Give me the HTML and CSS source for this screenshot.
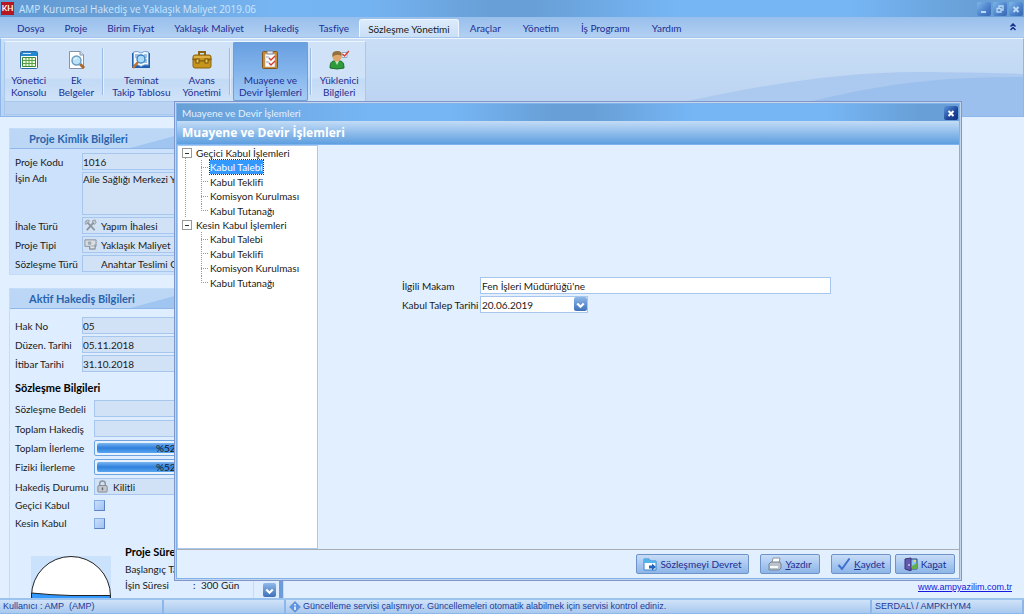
FILE: index.html
```html
<!DOCTYPE html>
<html lang="tr">
<head>
  <meta charset="UTF-8">
  <title>AMP Kurumsal Hakediş ve Yaklaşık Maliyet 2019.06</title>
  <link rel="stylesheet" href="styles.css">
</head>
<body>
  <header class="titlebar">
    <span class="app-logo">KH</span>
    <span class="app-title">AMP Kurumsal Hakediş ve Yaklaşık Maliyet 2019.06</span>
    <button class="win-btn" aria-label="Simge durumuna küçült"><svg viewBox="0 0 14 14"><path d="M4 10h5" stroke-width="2"/></svg></button>
    <button class="win-btn" aria-label="Önceki boyut"><svg viewBox="0 0 14 14"><path d="M6 6V4h4v4H8M4 6.500h4v3.500H4z" stroke-width="1.300"/></svg></button>
    <button class="win-btn" aria-label="Kapat"><svg viewBox="0 0 14 14"><path d="M4.500 5l5 5m0-5l-5 5" stroke-width="2"/></svg></button>
  </header>

  <nav class="tabs">
    <button class="tab">Dosya</button>
    <button class="tab">Proje</button>
    <button class="tab">Birim Fiyat</button>
    <button class="tab">Yaklaşık Maliyet</button>
    <button class="tab">Hakediş</button>
    <button class="tab">Tasfiye</button>
    <button class="tab active">Sözleşme Yönetimi</button>
    <button class="tab">Araçlar</button>
    <button class="tab">Yönetim</button>
    <button class="tab">İş Programı</button>
    <button class="tab">Yardım</button>
    <button class="collapse" aria-label="Şeridi daralt"><svg viewBox="0 0 8 8"><path d="M1.500 3.500L4 1l2.500 2.500M1.500 7L4 4.500 6.500 7"/></svg></button>
  </nav>

  <section class="ribbon">
    <svg class="wave" viewBox="0 0 1024 79" preserveAspectRatio="none">
      <path d="M690 63C790 42 860 32 940 34Q990 34 1024 36V79H690z" fill="#acc9ef"/>
      <path d="M790 70C860 50 930 38 1024 39V79H790z" fill="#9bc0ed"/>
    </svg>
    <div class="ribbon-group">
      <div class="ribbon-items">
        <button class="tool">
          <svg viewBox="0 0 20 20"><rect x="1.500" y="1.500" width="17" height="17" rx="1" fill="#fff" stroke="#2d6ca8"/><path d="M2 2h16v4H2z" fill="#2587ce"/><path d="M4 3.500h8" stroke="#c9e8ff"/><path d="M3.500 7.500h13v9h-13z" fill="#eefbdc" stroke="#3d8a35"/><path d="M4 10.500h12M4 13.500h12M7 8v8M10 8v8M13 8v8" stroke="#59a14d"/></svg>
          <span>Yönetici<br>Konsolu</span>
        </button>
        <button class="tool">
          <svg viewBox="0 0 20 20"><path d="M3.500 1.500h11l3 3v14h-14z" fill="#fff" stroke="#8494a8"/><path d="M14 1v4h4" fill="#d5e1ee" stroke="#8494a8"/><path d="M14 14l4 4" stroke="#a9672c" stroke-width="3"/><circle cx="10.500" cy="10.500" r="4.500" fill="#b9e3fb" stroke="#6c9dc2" stroke-width="1.500"/><path d="M8 10q1-2 3-2" stroke="#fff" fill="none"/></svg>
          <span>Ek<br>Belgeler</span>
        </button>
        <i class="sep"></i>
        <button class="tool">
          <svg viewBox="0 0 20 20"><path d="M1 3h18v15H1z" fill="#1f5fb2"/><path d="M2.500 2Q7 .500 10 3q3-2.500 7.500-1v13Q13 14 10 16.500 7 14 2.500 15z" fill="#f3f9ff" stroke="#6d9bce"/><path d="M4 5h4M4 7h3M13 5h3M14 7h2M14 10h2M13 12h3" stroke="#4b84c7"/><path d="M7 12l-5 6" stroke="#c1722c" stroke-width="2.500"/><circle cx="10" cy="9" r="4" fill="#a8dbfa" stroke="#3a7ebe" stroke-width="1.300"/></svg>
          <span>Teminat<br>Takip Tablosu</span>
        </button>
        <button class="tool">
          <svg viewBox="0 0 20 20"><path d="M7 5V2h6v3" fill="none" stroke="#8a6511" stroke-width="2"/><rect x="1" y="5" width="18" height="13" rx="2" fill="#c8951c" stroke="#8a6511"/><path d="M.500 9Q10 13 19.500 9" fill="none" stroke="#8a6511" stroke-width="1.500"/><path d="M2 6h16v2H2z" fill="#dcb044"/><rect x="4" y="9" width="3" height="4" fill="#e8cc6c" stroke="#765508"/><rect x="13" y="9" width="3" height="4" fill="#e8cc6c" stroke="#765508"/></svg>
          <span>Avans<br>Yönetimi</span>
        </button>
        <i class="sep"></i>
        <button class="tool active">
          <svg viewBox="0 0 20 20"><rect x="2.500" y="1.500" width="15" height="17" rx="1" fill="#c98b32" stroke="#85551b"/><path d="M5 4h10v13H5z" fill="#fff" stroke="#b1a28c" stroke-width=".600"/><path d="M7 1h6v3H7z" fill="#e1e6ee" stroke="#777e8a" stroke-width=".800"/><path d="M6 7h3M6 12h3" stroke="#8ba2c2"/><path d="M9 8l2 2 4-4M9 13l2 2 4-4" fill="none" stroke="#d43b2b" stroke-width="1.400"/></svg>
          <span>Muayene ve<br>Devir İşlemleri</span>
        </button>
        <i class="sep"></i>
        <button class="tool">
          <svg viewBox="0 0 20 20"><path d="M1 18q0-7 4-7h6q4 0 4 7-7 2-14 0z" fill="#2f9b3b" stroke="#1d6c2a"/><path d="M6 11l2 4 2-4z" fill="#bfe9c0"/><ellipse cx="8" cy="6.500" rx="4.500" ry="5" fill="#e0a868"/><path d="M3.500 7Q2 1 8 1t4.500 5Q8 3 3.500 7" fill="#94703a"/><path d="M13 2.500h5v5h-5z" fill="#fff" stroke="#92a8c4"/><path d="M13.500 4l2 2L20 1" fill="none" stroke="#dc3a2a" stroke-width="1.500"/></svg>
          <span>Yüklenici<br>Bilgileri</span>
        </button>
      </div>
      <div class="ribbon-caption"></div>
    </div>
  </section>

  <main class="workspace">
    <aside class="sidebar">
      <section class="panel project">
        <h2>Proje Kimlik Bilgileri</h2>
        <div class="fields">
          <label for="kod">Proje Kodu</label><input id="kod" value="1016" readonly>
          <label for="ad">İşin Adı</label><textarea id="ad" readonly>Aile Sağlığı Merkezi Yapım İşi</textarea>
          <label for="ihale">İhale Türü</label>
          <div class="icon-field">
            <svg viewBox="0 0 14 14"><path d="M2 2l9.500 10M3 12l8-9" stroke="#8e969f" stroke-width="2" fill="none"/><path d="M1 4l3-3 2 1-4 4zM9 2l3-1 1 3-2 2z" fill="#c5cbd1" stroke="#7d858e" stroke-width=".700"/></svg>
            <input id="ihale" value="Yapım İhalesi" readonly>
          </div>
          <label for="tip">Proje Tipi</label>
          <div class="icon-field">
            <svg viewBox="0 0 14 14"><path d="M1 2h12v7H1z" fill="#d8dde2" stroke="#868e98"/><circle cx="6" cy="5.500" r="2" fill="#a1a9b2"/><path d="M6 9v3h6V7" fill="#b9c0c8" stroke="#818992"/><path d="M7 10h4" stroke="#eef1f4"/></svg>
            <input id="tip" value="Yaklaşık Maliyet" readonly>
          </div>
          <label for="tur">Sözleşme Türü</label>
          <div class="icon-field"><svg viewBox="0 0 14 14"></svg><input id="tur" value="Anahtar Teslimi Götürü" readonly></div>
        </div>
      </section>

      <section class="panel progress-panel">
        <h2>Aktif Hakediş Bilgileri</h2>
        <div class="fields">
          <label for="hakno">Hak No</label><input id="hakno" value="05" readonly>
          <label for="duzen">Düzen. Tarihi</label><input id="duzen" value="05.11.2018" readonly>
          <label for="itibar">İtibar Tarihi</label><input id="itibar" value="31.10.2018" readonly>
        </div>
        <h3>Sözleşme Bilgileri</h3>
        <div class="fields wide">
          <label for="bedel">Sözleşme Bedeli</label><input id="bedel" readonly>
          <label for="toplam">Toplam Hakediş</label><input id="toplam" readonly>
          <span>Toplam İlerleme</span><div class="meter"><i></i><b>%52</b></div>
          <span>Fiziki İlerleme</span><div class="meter"><i></i><b>%52</b></div>
          <label for="durum">Hakediş Durumu</label>
          <div class="icon-field">
            <svg viewBox="0 0 14 14"><path d="M4 7V4q0-3 3-3t3 3v3" fill="none" stroke="#8c949c" stroke-width="1.500"/><rect x="2" y="6" width="10" height="7" rx="1" fill="#c3c8ce" stroke="#80878f"/><path d="M7 8v3" stroke="#616971" stroke-width="1.500"/></svg>
            <input id="durum" value="Kilitli" readonly>
          </div>
          <label for="gecici">Geçici Kabul</label><input type="checkbox" id="gecici">
          <label for="kesin">Kesin Kabul</label><input type="checkbox" id="kesin">
        </div>
        <div class="duration">
          <svg class="gauge" viewBox="0 0 80 80"><path d="M0 0h80v80H0z" fill="#cae2fc"/><circle cx="40" cy="40" r="39.500" fill="#fff" stroke="#222"/><path d="M.500 37Q20 39 40 39.500h39.500A39.500 39.500 0 0 1 .500 40z" fill="#3399ff" stroke="#222"/></svg>
          <div class="duration-info">
            <h3>Proje Süreci</h3>
            <p>Başlangıç Tarihi</p>
            <p><span>İşin Süresi</span><span>:</span><span>300 Gün</span></p>
          </div>
          <div class="duration-side"><button class="drop" aria-label="Aşağı"><svg viewBox="0 0 12 12"><path d="M3 5l3 3 3-3"/></svg></button></div>
        </div>
      </section>
    </aside>
    <a class="site-link" href="#">www.ampyazilim.com.tr</a>
  </main>

  <footer class="statusbar">
    <span class="user">Kullanıcı : AMP&nbsp; (AMP)</span>
    <span class="blank"></span>
    <span class="message"><svg viewBox="0 0 12 12"><path d="M6 0l6 6-6 6-6-6z" fill="#5d94e3" stroke="#a8bad6"/><path d="M6 3v1.500M6 5.500V9" stroke="#fff" stroke-width="1.500"/></svg>Güncelleme servisi çalışmıyor. Güncellemeleri otomatik alabilmek için servisi kontrol ediniz.</span>
    <span class="server">SERDAL\ / AMPKHYM4</span>
  </footer>

  <div class="dialog" role="dialog" aria-labelledby="dialog-title">
    <div class="dialog-bar">
      <span>Muayene ve Devir İşlemleri</span>
      <button class="win-btn" aria-label="Pencereyi kapat"><svg viewBox="0 0 14 14"><path d="M4.500 5l5 5m0-5l-5 5" stroke-width="2"/></svg></button>
    </div>
    <h1 id="dialog-title">Muayene ve Devir İşlemleri</h1>
    <div class="dialog-body">
      <ul class="tree">
        <li>
          <button class="branch">Geçici Kabul İşlemleri</button>
          <ul>
            <li><button class="selected">Kabul Talebi</button></li>
            <li><button>Kabul Teklifi</button></li>
            <li><button>Komisyon Kurulması</button></li>
            <li><button>Kabul Tutanağı</button></li>
          </ul>
        </li>
        <li>
          <button class="branch">Kesin Kabul İşlemleri</button>
          <ul>
            <li><button>Kabul Talebi</button></li>
            <li><button>Kabul Teklifi</button></li>
            <li><button>Komisyon Kurulması</button></li>
            <li><button>Kabul Tutanağı</button></li>
          </ul>
        </li>
      </ul>
      <form class="request">
        <label for="makam">İlgili Makam</label>
        <input id="makam" value="Fen İşleri Müdürlüğü'ne">
        <label for="tarih">Kabul Talep Tarihi</label>
        <div class="date">
          <input id="tarih" value="20.06.2019">
          <button type="button" class="drop" aria-label="Takvim"><svg viewBox="0 0 12 12"><path d="M3 5l3 3 3-3"/></svg></button>
        </div>
      </form>
    </div>
    <div class="dialog-actions">
      <button class="action transfer"><svg viewBox="0 0 14 14"><path d="M1 2h5l1 2h6v9H1z" fill="#fff" stroke="#3486ca"/><path d="M1 2h5l1 2h6v2H1z" fill="#52b4ed"/><path d="M6 8.500h3V6.500l4 3.500-4 3.500v-2H6z" fill="#2566bd"/></svg>Sözleşmeyi Devret</button>
      <button class="action print"><svg viewBox="0 0 14 14"><path d="M4 6l1-5h7l-1 5z" fill="#fff" stroke="#8a949f"/><path d="M1 7l2-2h9l1 2v4l-2 2H1z" fill="#bac3cc" stroke="#76818d"/><path d="M2 10h8" stroke="#f7f9fb" stroke-width="2"/></svg><span><u>Y</u>azdır</span></button>
      <button class="action save"><svg viewBox="0 0 14 14"><path d="M1.500 8L5 12 12.500 1.500" fill="none" stroke="#3e6fd0" stroke-width="2"/></svg><span><u>K</u>aydet</span></button>
      <button class="action close"><svg viewBox="0 0 14 14"><path d="M5 2h8v10H5z" fill="#8cc8ee" stroke="#2f4379"/><path d="M8 9l5-3v6H8z" fill="#65ad45"/><circle cx="11" cy="4" r="1" fill="#ffe061"/><path d="M1 2l6-1v13l-6-2z" fill="#6558b0" stroke="#383574"/><path d="M5 7v2" stroke="#fff"/></svg><span>Ka<u>p</u>at</span></button>
    </div>
  </div>
</body>
</html>
```
FILE: styles.css
```css
* {
  box-sizing: border-box;
}

body {
  position: relative;
  display: flex;
  flex-direction: column;
  height: 100vh;
  margin: 0;
  overflow: hidden;
  background: #e1efff;
  color: #1a1a1a;
  font-family: Lato, "Open Sans", sans-serif;
  font-size: 10px;
  line-height: 12px;
}

button,
input,
textarea {
  margin: 0;
  padding: 0;
  border: none;
  background: none;
  color: inherit;
  font: inherit;
}

h1, h2, h3, p, ul {
  margin: 0;
  padding: 0;
}

/* title bar */
.titlebar {
  display: flex;
  flex: none;
  align-items: center;
  gap: 2px;
  height: 17px;
  padding: 0 1px;
  background: linear-gradient(90deg, #619bd5, #689fd6 10%, #76b5f3 27%, #74b3f1 36%, #689fd6 48%, #689fd6 52%, #76b6f5 66%, #76b6f5 83%, #689fd6 95%);
}

.app-logo {
  width: 13px;
  height: 13px;
  background: #b5161f;
  color: #fff;
  font-size: 8px;
  font-weight: bold;
  line-height: 13px;
  text-align: center;
}

.app-title {
  flex: 1;
  padding-left: 3px;
  color: #cfe6fd;
  font-family: "Open Sans", sans-serif;
}

.win-btn {
  width: 14px;
  height: 14px;
  border-radius: 2px;
  background: linear-gradient(135deg, #7fb8ec, #4a80c8 60%, #3a68b4);
}

.win-btn svg,
.drop svg {
  display: block;
  width: 100%;
  fill: none;
  stroke: #bcd9f6;
}

/* tabs */
.tabs {
  display: flex;
  flex: none;
  align-items: flex-end;
  height: 21px;
  padding: 0 7px;
  background: linear-gradient(#98bfec, #b2d0f2);
  border-bottom: 1px solid #a4c4ec;
}

.tab {
  height: 18px;
  padding: 0 9px;
  border: 1px solid transparent;
  color: #1f2f92;
  white-space: nowrap;
}

.tab.active {
  padding: 0 8px;
  border-color: #eef6ff;
  border-bottom: none;
  border-radius: 3px 3px 0 0;
  background: linear-gradient(#dcebfb, #c9dff6);
  color: #1a1a1a;
}

.tab.active ~ .tab {
  padding: 0 10px;
}

.collapse {
  align-self: center;
  width: 8px;
  margin-left: auto;
}

.collapse svg {
  display: block;
  fill: none;
  stroke: #19318b;
  stroke-width: 1.5;
}

/* ribbon */
.ribbon {
  position: relative;
  flex: none;
  height: 79px;
  padding: 2px 3px;
  border: 1px solid #8db7ea;
  border-top-color: #edf5fe;
  background: linear-gradient(#c9def6, #b9d2f1);
}

.wave {
  position: absolute;
  inset: 0;
  width: 100%;
  height: 100%;
}

.ribbon-group {
  position: relative;
  width: fit-content;
  border: 1px solid #a8c8ee;
  border-top-color: #edf5fe;
}

.ribbon-items {
  display: flex;
  height: 59px;
  background: linear-gradient(#d0e2f7, #d0e2f7 60%, #c3daf5 64%, #cfe2f8);
}

.ribbon-caption {
  height: 13px;
  border-top: 1px solid #a8c8ee;
  background: #bad3f2;
}

.tool {
  display: flex;
  flex-direction: column;
  align-items: center;
  gap: 4px;
  padding: 8px 6px 0;
  color: #1f2f92;
  white-space: nowrap;
}

.tool svg {
  width: 20px;
  height: 20px;
}

.tool.active {
  border-radius: 2px;
  background: linear-gradient(#689fe0, #83b4ec 50%, #a5cdf6);
  box-shadow: inset 0 0 0 1px #6e9fd9;
}

.sep {
  width: 2px;
  margin: 6px 2px;
  border-left: 1px solid #9bbde5;
  border-right: 1px solid #e2eefb;
}

/* workspace */
.workspace {
  display: flex;
  flex: 1;
  align-items: flex-end;
  justify-content: space-between;
  min-height: 0;
  padding: 0 12px 0 9px;
  overflow: hidden;
}

.sidebar {
  align-self: flex-start;
  width: 275px;
  padding-top: 11px;
}

.site-link {
  padding-bottom: 5px;
  color: #1518e0;
  font-family: "Liberation Sans", sans-serif;
  font-size: 9px;
}

.panel {
  border: 1px solid #c3dcf8;
  background: #deedff;
}

.panel.project {
  margin-bottom: 13px;
  padding-bottom: 2px;
  background: #cce2fc;
}

.panel h2 {
  height: 20px;
  padding-left: 19px;
  border-bottom: 1px solid #8fb7e8;
  background: linear-gradient(165deg, #bcd7f6 55%, #9fc5f0 56%);
  color: #2a64ad;
  font-size: 11px;
  line-height: 20px;
}

.fields {
  display: grid;
  grid-template-columns: 67px 1fr;
  gap: 2px 0;
  align-items: center;
  padding: 4px 0 0 5px;
  white-space: nowrap;
}

.fields input,
.fields textarea,
.icon-field {
  width: 100%;
  height: 17px;
  border: 1px solid #a6c6ee;
  background: #d2e2f6;
}

.fields textarea {
  display: block;
  height: 43px;
  resize: none;
  white-space: nowrap;
  overflow: hidden;
}

.fields label[for="ad"] {
  align-self: start;
}

.icon-field {
  display: flex;
  align-items: center;
  gap: 4px;
  padding-left: 1px;
}

.icon-field svg {
  flex: none;
  width: 13px;
  height: 13px;
}

.fields .icon-field input {
  height: 15px;
  border: none;
  background: none;
}

.progress-panel .fields {
  padding-top: 8px;
}

.panel h3 {
  padding-left: 5px;
  color: #000;
  font-size: 11px;
  line-height: 14px;
}

.progress-panel > h3 {
  padding-top: 9px;
}

.progress-panel .fields.wide {
  grid-template-columns: 79px 1fr;
  gap: 3px 0;
  padding-top: 5px;
}

.meter {
  position: relative;
  height: 16px;
  padding: 2px;
  border: 1px solid #6ea3e2;
  border-radius: 2px;
  background: #e8f2fd;
}

.meter i {
  display: block;
  width: 52%;
  height: 10px;
  border-radius: 2px;
  background: linear-gradient(#7ab5f2, #2f80dc 50%, #58a5f0);
}

.meter b {
  position: absolute;
  top: 1px;
  left: 61px;
  font-weight: normal;
}

.fields input[type="checkbox"] {
  width: 11px;
  height: 11px;
  appearance: none;
  border-color: #86aee4 #5d83c2 #5d83c2 #86aee4;
  background: linear-gradient(135deg, #c9dffa, #9fc2f2);
}

.fields label[for="gecici"],
.fields label[for="kesin"] {
  line-height: 15px;
}

.duration {
  display: flex;
  gap: 9px;
  padding: 14px 0 0 21px;
}

.gauge {
  flex: none;
  width: 80px;
  height: 80px;
  margin-top: 11px;
}

.duration-info {
  flex: 1;
  white-space: nowrap;
}

.duration-info p {
  display: grid;
  grid-template-columns: 68px 8px 1fr;
  padding: 4px 0 0 5px;
}

.duration-side {
  width: 30px;
  padding: 38px 2px 0 9px;
  border-left: 1px solid #c3dcf8;
  border-right: 4px solid #6d9ad8;
}

.drop {
  width: 13px;
  height: 14px;
  border-radius: 2px;
  background: linear-gradient(#8fb9ea, #3e70ba);
}

.drop svg {
  stroke: #fff;
  stroke-width: 2;
}

/* status bar */
.statusbar {
  display: flex;
  flex: none;
  height: 16px;
  border-top: 2px solid #9cc2ee;
  border-bottom: 1px solid #8db7ea;
  background: linear-gradient(#cfe2f8, #a8c9ef);
  color: #22399a;
  font-family: "Liberation Sans", sans-serif;
  font-size: 9px;
  line-height: 13px;
}

.statusbar span {
  padding-left: 3px;
  border-right: 2px solid #8db7ea;
  white-space: nowrap;
}

.statusbar .user {
  width: 164px;
}

.statusbar .blank {
  width: 122px;
}

.statusbar .message {
  display: flex;
  flex: 1;
  align-items: center;
  gap: 2px;
}

.statusbar .message svg {
  width: 12px;
  height: 12px;
}

.statusbar .server {
  width: 152px;
}

/* dialog window */
.dialog {
  position: absolute;
  inset: 101px 62px 33px 174px;
  display: flex;
  flex-direction: column;
  border: 1px solid #8095c8;
  outline: 1px solid #c4d5ee;
  outline-offset: -2px;
  padding: 2px;
  background: #7fb1ea;
}

.dialog-bar {
  display: flex;
  align-items: center;
  justify-content: space-between;
  height: 17px;
  padding: 0 1px 0 5px;
  background: linear-gradient(90deg, #689fd6, #76b6f5 25%, #76b6f5 35%, #689fd6 48%, #689fd6 53%, #76b6f5 66%, #76b6f5 83%, #689fd6 95%);
  color: #e3f1ff;
}

.dialog .win-btn {
  background: linear-gradient(135deg, #5d97dc, #1c4599 60%, #12317e);
}

.dialog .win-btn svg {
  stroke: #fff;
}

.dialog h1 {
  height: 24px;
  padding-left: 5px;
  border-bottom: 1px solid #7db3ee;
  background: linear-gradient(#c3dcf6, #5e9fe0);
  color: #fff;
  font-family: "Open Sans", sans-serif;
  font-size: 12px;
  line-height: 24px;
}

.dialog-body {
  display: flex;
  flex: 1;
  min-height: 0;
  background: #e1efff;
}

.tree {
  width: 141px;
  padding: 0 0 0 4px;
  border: 1px solid #a9c9f0;
  background: #fff;
  list-style: none;
}

.tree > li:first-child {
  background: repeating-linear-gradient(#999 0 1px, transparent 1px 2px) 3px 8px / 1px 100% no-repeat;
}

.tree button {
  display: block;
  height: 14px;
  line-height: 14px;
  white-space: nowrap;
}

.tree .branch {
  display: flex;
  align-items: center;
  gap: 4px;
}

/* minus box */
.branch::before {
  content: "";
  width: 8px;
  height: 8px;
  border: 1px solid #999;
  background: linear-gradient(#333, #333) center / 4px 1px no-repeat #fff;
}

.tree ul {
  display: grid;
  grid-auto-rows: 1fr;
  height: 58px;
  margin-left: 19px;
  list-style: none;
}

.tree ul li {
  display: flex;
  align-items: center;
  gap: 2px;
  background: repeating-linear-gradient(#999 0 1px, transparent 1px 2px) 0 0 / 1px 100% no-repeat;
}

.tree ul li:last-child {
  background-size: 1px 8px;
}

.tree ul li::before {
  content: "";
  width: 7px;
  border-top: 1px dotted #999;
}

.tree .selected {
  background: #3399ff;
  color: #fff;
  outline: 1px dotted #333;
}

.request {
  display: grid;
  flex: 1;
  grid-template-columns: 78px 351px;
  grid-auto-rows: 17px;
  gap: 2px 0;
  align-items: center;
  align-content: start;
  padding: 132px 0 0 84px;
  white-space: nowrap;
}

.request > input,
.date {
  height: 17px;
  padding-left: 1px;
  border: 1px solid #a6c6ee;
  background: #fff;
}

.date {
  display: flex;
  width: 108px;
}

.date input {
  flex: 1;
  min-width: 0;
}

.dialog-actions {
  display: flex;
  justify-content: flex-end;
  gap: 4px;
  height: 29px;
  padding: 4px;
  border-top: 1px solid #a9adb3;
  background: #e1efff;
}

.action {
  display: flex;
  align-items: center;
  justify-content: center;
  gap: 3px;
  width: 60px;
  height: 20px;
  border: 1px solid #6e93c8;
  border-radius: 2px;
  background: linear-gradient(#c8ddf7, #a9c8f0 50%, #8db5e8);
  color: #1f2f92;
  white-space: nowrap;
}

.action svg {
  width: 14px;
  height: 14px;
}

.action.transfer {
  width: 113px;
}

.action.transfer,
.action.print {
  margin-right: 7px;
}
```
